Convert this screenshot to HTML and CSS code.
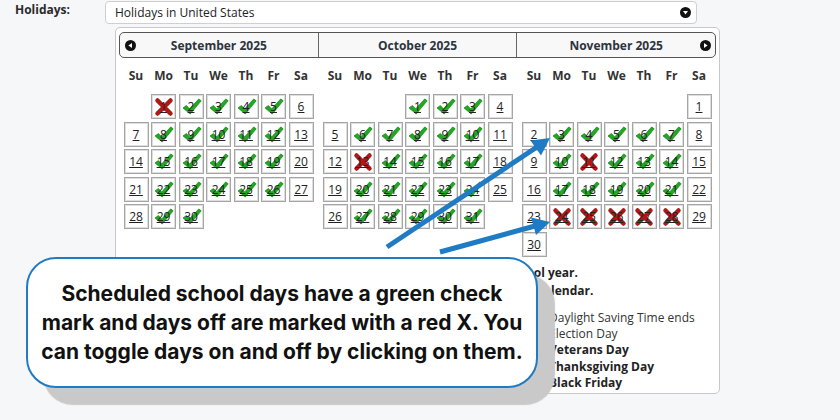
FILE: index.html
```html
<!DOCTYPE html>
<html lang="en">
<head>
    <meta charset="UTF-8">
    <meta name="viewport" content="width=device-width, initial-scale=1.0">
    <title>School Calendar</title>
    <link rel="stylesheet" href="styles.css">
</head>
<body>
    <div class="field">
        <label class="field-label" for="holidays">Holidays:</label>
        <div class="select" id="holidays">
            <span>Holidays in United States</span>
            <svg class="icon" width="11" height="11" viewBox="0 0 11 11"><circle cx="5.5" cy="5.5" r="5.5" fill="#111"/><path d="M3 4 L8 4 L5.5 7.6 Z" fill="#fff"/></svg>
        </div>
    </div>

    <div class="calendar">
        <div class="cal-head">
            <div class="title">
                <svg class="icon" width="11" height="11" viewBox="0 0 11 11"><circle cx="5.5" cy="5.5" r="5.5" fill="#111"/><path d="M7 3 L7 8 L3.4 5.5 Z" fill="#fff"/></svg>
                <span>September 2025</span>
                <span></span>
            </div>
            <div class="title">
                <span></span>
                <span>October 2025</span>
                <span></span>
            </div>
            <div class="title">
                <span></span>
                <span>November 2025</span>
                <svg class="icon" width="11" height="11" viewBox="0 0 11 11"><circle cx="5.5" cy="5.5" r="5.5" fill="#111"/><path d="M4 3 L4 8 L7.6 5.5 Z" fill="#fff"/></svg>
            </div>
        </div>

        <div class="months">
            <div class="month">
                <div class="dow"><span>Su</span><span>Mo</span><span>Tu</span><span>We</span><span>Th</span><span>Fr</span><span>Sa</span></div>
                <div class="days">
                    <span></span><a class="day off">1</a><a class="day on">2</a><a class="day on">3</a><a class="day on">4</a><a class="day on">5</a><a class="day">6</a>
                    <a class="day">7</a><a class="day on">8</a><a class="day on">9</a><a class="day on">10</a><a class="day on">11</a><a class="day on">12</a><a class="day">13</a>
                    <a class="day">14</a><a class="day on">15</a><a class="day on">16</a><a class="day on">17</a><a class="day on">18</a><a class="day on">19</a><a class="day">20</a>
                    <a class="day">21</a><a class="day on">22</a><a class="day on">23</a><a class="day on">24</a><a class="day on">25</a><a class="day on">26</a><a class="day">27</a>
                    <a class="day">28</a><a class="day on">29</a><a class="day on">30</a>
                </div>
            </div>
            <div class="month">
                <div class="dow"><span>Su</span><span>Mo</span><span>Tu</span><span>We</span><span>Th</span><span>Fr</span><span>Sa</span></div>
                <div class="days">
                    <span></span><span></span><span></span><a class="day on">1</a><a class="day on">2</a><a class="day on">3</a><a class="day">4</a>
                    <a class="day">5</a><a class="day on">6</a><a class="day on">7</a><a class="day on">8</a><a class="day on">9</a><a class="day on">10</a><a class="day">11</a>
                    <a class="day">12</a><a class="day off">13</a><a class="day on">14</a><a class="day on">15</a><a class="day on">16</a><a class="day on">17</a><a class="day">18</a>
                    <a class="day">19</a><a class="day on">20</a><a class="day on">21</a><a class="day on">22</a><a class="day on">23</a><a class="day on">24</a><a class="day">25</a>
                    <a class="day">26</a><a class="day on">27</a><a class="day on">28</a><a class="day on">29</a><a class="day on">30</a><a class="day on">31</a>
                </div>
            </div>
            <div class="month">
                <div class="dow"><span>Su</span><span>Mo</span><span>Tu</span><span>We</span><span>Th</span><span>Fr</span><span>Sa</span></div>
                <div class="days">
                    <span></span><span></span><span></span><span></span><span></span><span></span><a class="day">1</a>
                    <a class="day">2</a><a class="day on">3</a><a class="day on">4</a><a class="day on">5</a><a class="day on">6</a><a class="day on">7</a><a class="day">8</a>
                    <a class="day">9</a><a class="day on">10</a><a class="day off">11</a><a class="day on">12</a><a class="day on">13</a><a class="day on">14</a><a class="day">15</a>
                    <a class="day">16</a><a class="day on">17</a><a class="day on">18</a><a class="day on">19</a><a class="day on">20</a><a class="day on">21</a><a class="day">22</a>
                    <a class="day">23</a><a class="day off">24</a><a class="day off">25</a><a class="day off">26</a><a class="day off">27</a><a class="day off">28</a><a class="day">29</a>
                    <a class="day">30</a>
                </div>
            </div>
        </div>

        <div class="notes">
            <p><b>Days marked with a green check are counted as part of the school year.</b></p>
            <p><b>Holidays in the selected list below are marked as days off on the calendar.</b></p>
            <div class="holidays">
                <span class="date">Sun, Nov 2</span><span>Daylight Saving Time ends</span>
                <span class="date">Tue, Nov 4</span><span>Election Day</span>
                <span class="date">Tue, Nov 11</span><b>Veterans Day</b>
                <span class="date">Thu, Nov 27</span><b>Thanksgiving Day</b>
                <span class="date">Fri, Nov 28</span><b>Black Friday</b>
            </div>
        </div>
    </div>

    <!-- annotation arrows -->
    <svg class="arrows" width="840" height="420" viewBox="0 0 840 420">
        <line x1="387" y1="247" x2="537" y2="147" stroke="#1f7bc4" stroke-width="5"/>
        <path d="M550 138 L541 155.5 L530.5 140.5 Z" fill="#1f7bc4"/>
        <line x1="440" y1="252" x2="535" y2="226" stroke="#1f7bc4" stroke-width="5"/>
        <path d="M550 222 L536 235 L531 217.5 Z" fill="#1f7bc4"/>
    </svg>

    <div class="callout">
        <p>Scheduled school days have a green check<br>mark and days off are marked with a red X. You<br>can toggle days on and off by clicking on them.</p>
    </div>
</body>
</html>
```

FILE: styles.css
```css
body {
    margin: 0;
    position: relative;
    width: 840px;
    height: 420px;
    overflow: hidden;
    background-color: #f6f7f9;
    font-family: "Open Sans", sans-serif;
    font-size: 12px;
    color: #222;
}
.icon {
    display: block;
}
.field {
    display: flex;
    align-items: flex-start;
}
.field-label {
    width: 90px;
    padding: 2px 0 0 15px;
    line-height: 16px;
    font-weight: bold;
    color: #2b2b2b;
}
.select {
    margin-top: 1px;
    width: 592px;
    height: 23px;
    box-sizing: border-box;
    border: 1px solid #cfcfcf;
    border-radius: 4px;
    background-color: #fff;
    display: flex;
    align-items: center;
    justify-content: space-between;
    padding: 0 5px 0 9px;
    color: #222;
}
.calendar {
    margin: 3px 0 0 115px;
    width: 605px;
    height: 367px;
    box-sizing: border-box;
    border: 1px solid #c8c8c8;
    border-radius: 5px;
    background-color: #fff;
    padding: 4px 3px;
}
.cal-head {
    display: flex;
    height: 26px;
    box-sizing: border-box;
    border: 1px solid #555;
    border-radius: 5px;
    background-color: #f8f8f8;
}
.cal-head .title {
    flex: 1;
    display: grid;
    grid-template-columns: 20px 1fr 20px;
    align-items: center;
    justify-items: center;
    font-weight: bold;
    color: #2d3440;
}
.cal-head .title + .title {
    border-left: 1px solid #666;
}
.months {
    display: flex;
}
.month {
    flex: 1;
}
.dow,
.days {
    display: grid;
    grid-template-columns: repeat(7, 25px);
    column-gap: 2.5px;
    justify-content: center;
}
.dow {
    margin: 8px 0;
    height: 20px;
    line-height: 20px;
    text-align: center;
    font-weight: bold;
    color: #333;
}
.days {
    grid-auto-rows: 25px;
    row-gap: 2.5px;
}
.day {
    box-sizing: border-box;
    border: 1px solid #a5a5a5;
    box-shadow: inset 0 0 0 1px #dedede;
    display: flex;
    align-items: center;
    justify-content: center;
    color: #222;
    text-decoration: underline;
    background-color: #fff;
    background-repeat: no-repeat;
    cursor: pointer;
}
.day.on {
    background-image: url("data:image/svg+xml;utf8,<svg xmlns='http://www.w3.org/2000/svg' viewBox='0 0 21 18'><path d='M1 10.5 L4.6 8 L8 11.6 L17.6 1 L20.2 3 L8.6 17 Z' fill='%2322a822' stroke='%23118a11' stroke-width='0.8' stroke-linejoin='round'/></svg>");
    background-position: 2px 3px;
    background-size: 20px 17px;
}
.day.off {
    background-image: url("data:image/svg+xml;utf8,<svg xmlns='http://www.w3.org/2000/svg' viewBox='0 0 20 20'><path d='M3.5 3.5 L16.5 16.5 M16.5 3.5 L3.5 16.5' stroke='%23b01818' stroke-width='4.5' stroke-linecap='round'/></svg>");
    background-position: center;
    background-size: 20px 20px;
}
.notes {
    padding: 7px 0 0 31px;
}
.notes p {
    margin: 0;
    line-height: 18px;
    white-space: nowrap;
}
.holidays {
    margin-top: 10px;
    display: grid;
    grid-template-columns: 399px auto;
    line-height: 16.4px;
    color: #333;
}
.holidays b {
    color: #222;
}
.holidays .date {
    text-align: right;
    padding-right: 8px;
}
.arrows {
    position: absolute;
    left: 0;
    top: 0;
    pointer-events: none;
}
.callout {
    position: absolute;
    left: 26px;
    top: 257px;
    width: 512px;
    height: 131px;
    box-sizing: border-box;
    border: 2.5px solid #1f7bc4;
    border-radius: 30px;
    background-color: #fff;
    box-shadow: 17px 17px 1px #c9c9c9;
    display: flex;
    align-items: center;
    justify-content: center;
    text-align: center;
}
.callout p {
    margin: 0;
    font-family: Inter, sans-serif;
    font-weight: bold;
    font-size: 21px;
    line-height: 29px;
    color: #111;
    white-space: nowrap;
}
```
